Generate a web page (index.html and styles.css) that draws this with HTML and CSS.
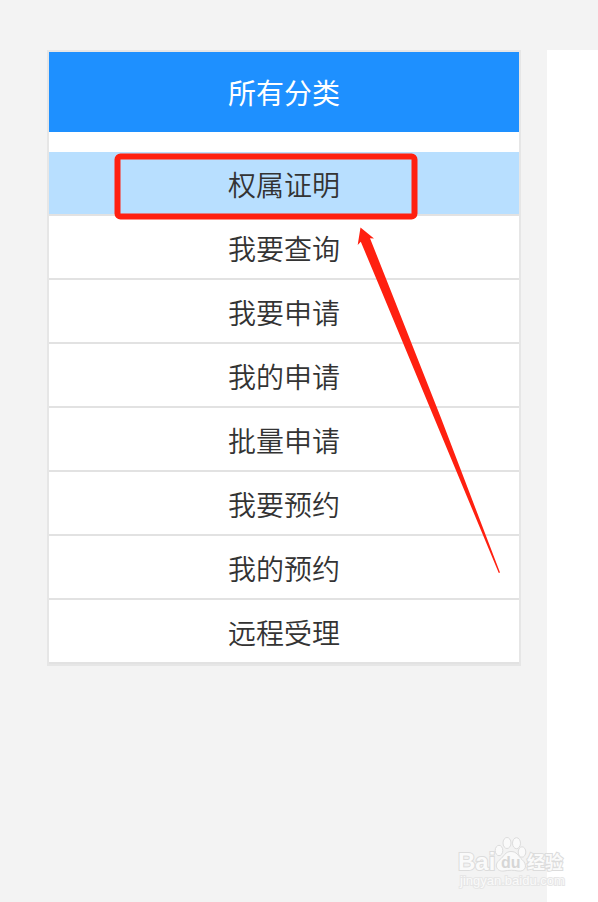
FILE: index.html
```html
<!DOCTYPE html>
<html lang="zh-CN">

<head>
    <meta charset="utf-8">
    <meta name="viewport" content="width=device-width, initial-scale=1">
    <title>所有分类</title>
    <link rel="stylesheet" href="styles.css">
</head>

<body>
    <div class="page">
        <nav class="sidebar">
            <h2 class="sidebar-title">所有分类</h2>
            <ul class="menu">
                <li><a class="menu-item active" href="#">权属证明</a></li>
                <li><a class="menu-item" href="#">我要查询</a></li>
                <li><a class="menu-item" href="#">我要申请</a></li>
                <li><a class="menu-item" href="#">我的申请</a></li>
                <li><a class="menu-item" href="#">批量申请</a></li>
                <li><a class="menu-item" href="#">我要预约</a></li>
                <li><a class="menu-item" href="#">我的预约</a></li>
                <li><a class="menu-item" href="#">远程受理</a></li>
            </ul>

            <!-- Red frame and arrow over the menu -->
            <svg class="annotation" width="390" height="424" viewBox="112 152 390 424" aria-hidden="true">
                <rect x="117.5" y="156.5" width="297" height="60" rx="3" fill="none" stroke="#ff2010" stroke-width="6"/>
                <path d="M360.5 227.5L374 238.5L370 238.2L390.5 290L441 418L500 572.5L498.8 573L435 420L381 290L360.8 241.8L357.7 245Z" fill="#ff2010"/>
            </svg>
        </nav>

        <main class="content"></main>
    </div>

    <!-- Watermark -->
    <svg class="watermark" width="110" height="56" viewBox="0 0 110 56" role="img" aria-label="Baidu 经验">
        <text class="watermark-name" x="0" y="34">Bai</text>
        <g class="watermark-paw">
            <ellipse cx="41" cy="14.5" rx="3.8" ry="5.2"/>
            <ellipse cx="49" cy="7" rx="4" ry="5.5"/>
            <ellipse cx="58.5" cy="7.2" rx="4" ry="5.5"/>
            <ellipse cx="64" cy="16" rx="3.8" ry="5.2"/>
            <path d="M53 15.5C47 15.5 46 20.5 42 23.5C35 29 39 36 46 35C51 34 56 34 60 35C68 36 70 29 64 23.5C60 20 59 15.5 53 15.5Z"/>
        </g>
        <text class="watermark-du" x="43" y="32">du</text>
        <text class="watermark-cn" x="69" y="33">经验</text>
        <text class="watermark-url" x="2" y="49">jingyan.baidu.com</text>
    </svg>
</body>

</html>
```

FILE: styles.css
```css
* {
    box-sizing: border-box;
}

body {
    margin: 0;
    background: #f3f3f3;
    color: #333;
    font-family: "Noto Sans CJK SC", sans-serif;
    font-size: 28px;
    font-weight: 350;
}

.page {
    display: flex;
    align-items: stretch;
    gap: 26px;
    min-height: 100vh;
    padding: 50px 0 0 47px;
}

.sidebar {
    position: relative;
    flex: 0 0 474px;
    align-self: flex-start;
    background: #fff;
    border: 2px solid #e6e6e6;
}

.sidebar-title {
    margin: 0 0 20px;
    background: #1e90ff;
    color: #fff;
    font-size: 28px;
    font-weight: 400;
    line-height: 80px;
    text-align: center;
}

.menu {
    margin: 0;
    padding: 0;
    list-style: none;
}

.menu-item {
    display: block;
    padding-top: 2px;
    border-bottom: 2px solid #e2e2e2;
    color: #333;
    line-height: 60px;
    text-align: center;
    text-decoration: none;
}

.menu-item:hover,
.menu-item.active {
    background: #b8dfff;
}

.content {
    flex: 1;
    background: #fff;
}

.annotation {
    position: absolute;
    top: 100px;
    left: 63px;
    pointer-events: none;
}

.watermark {
    position: absolute;
    right: 30px;
    bottom: 10px;
    font-family: "Liberation Sans", "Noto Sans CJK SC", sans-serif;
    fill: #fafafa;
    stroke: #dcdcdc;
    stroke-width: 1px;
}

.watermark text {
    paint-order: stroke;
    stroke-width: 2px;
}

.watermark-name {
    font-size: 24px;
    font-weight: 700;
}

.watermark .watermark-du {
    fill: #d6d6d6;
    stroke: none;
    font-size: 16px;
    font-weight: 700;
}

.watermark-cn {
    font-size: 18px;
    font-weight: 700;
}

.watermark .watermark-url {
    stroke: #e6e6e6;
    stroke-width: 2px;
    font-size: 13px;
    font-weight: 400;
}
```
